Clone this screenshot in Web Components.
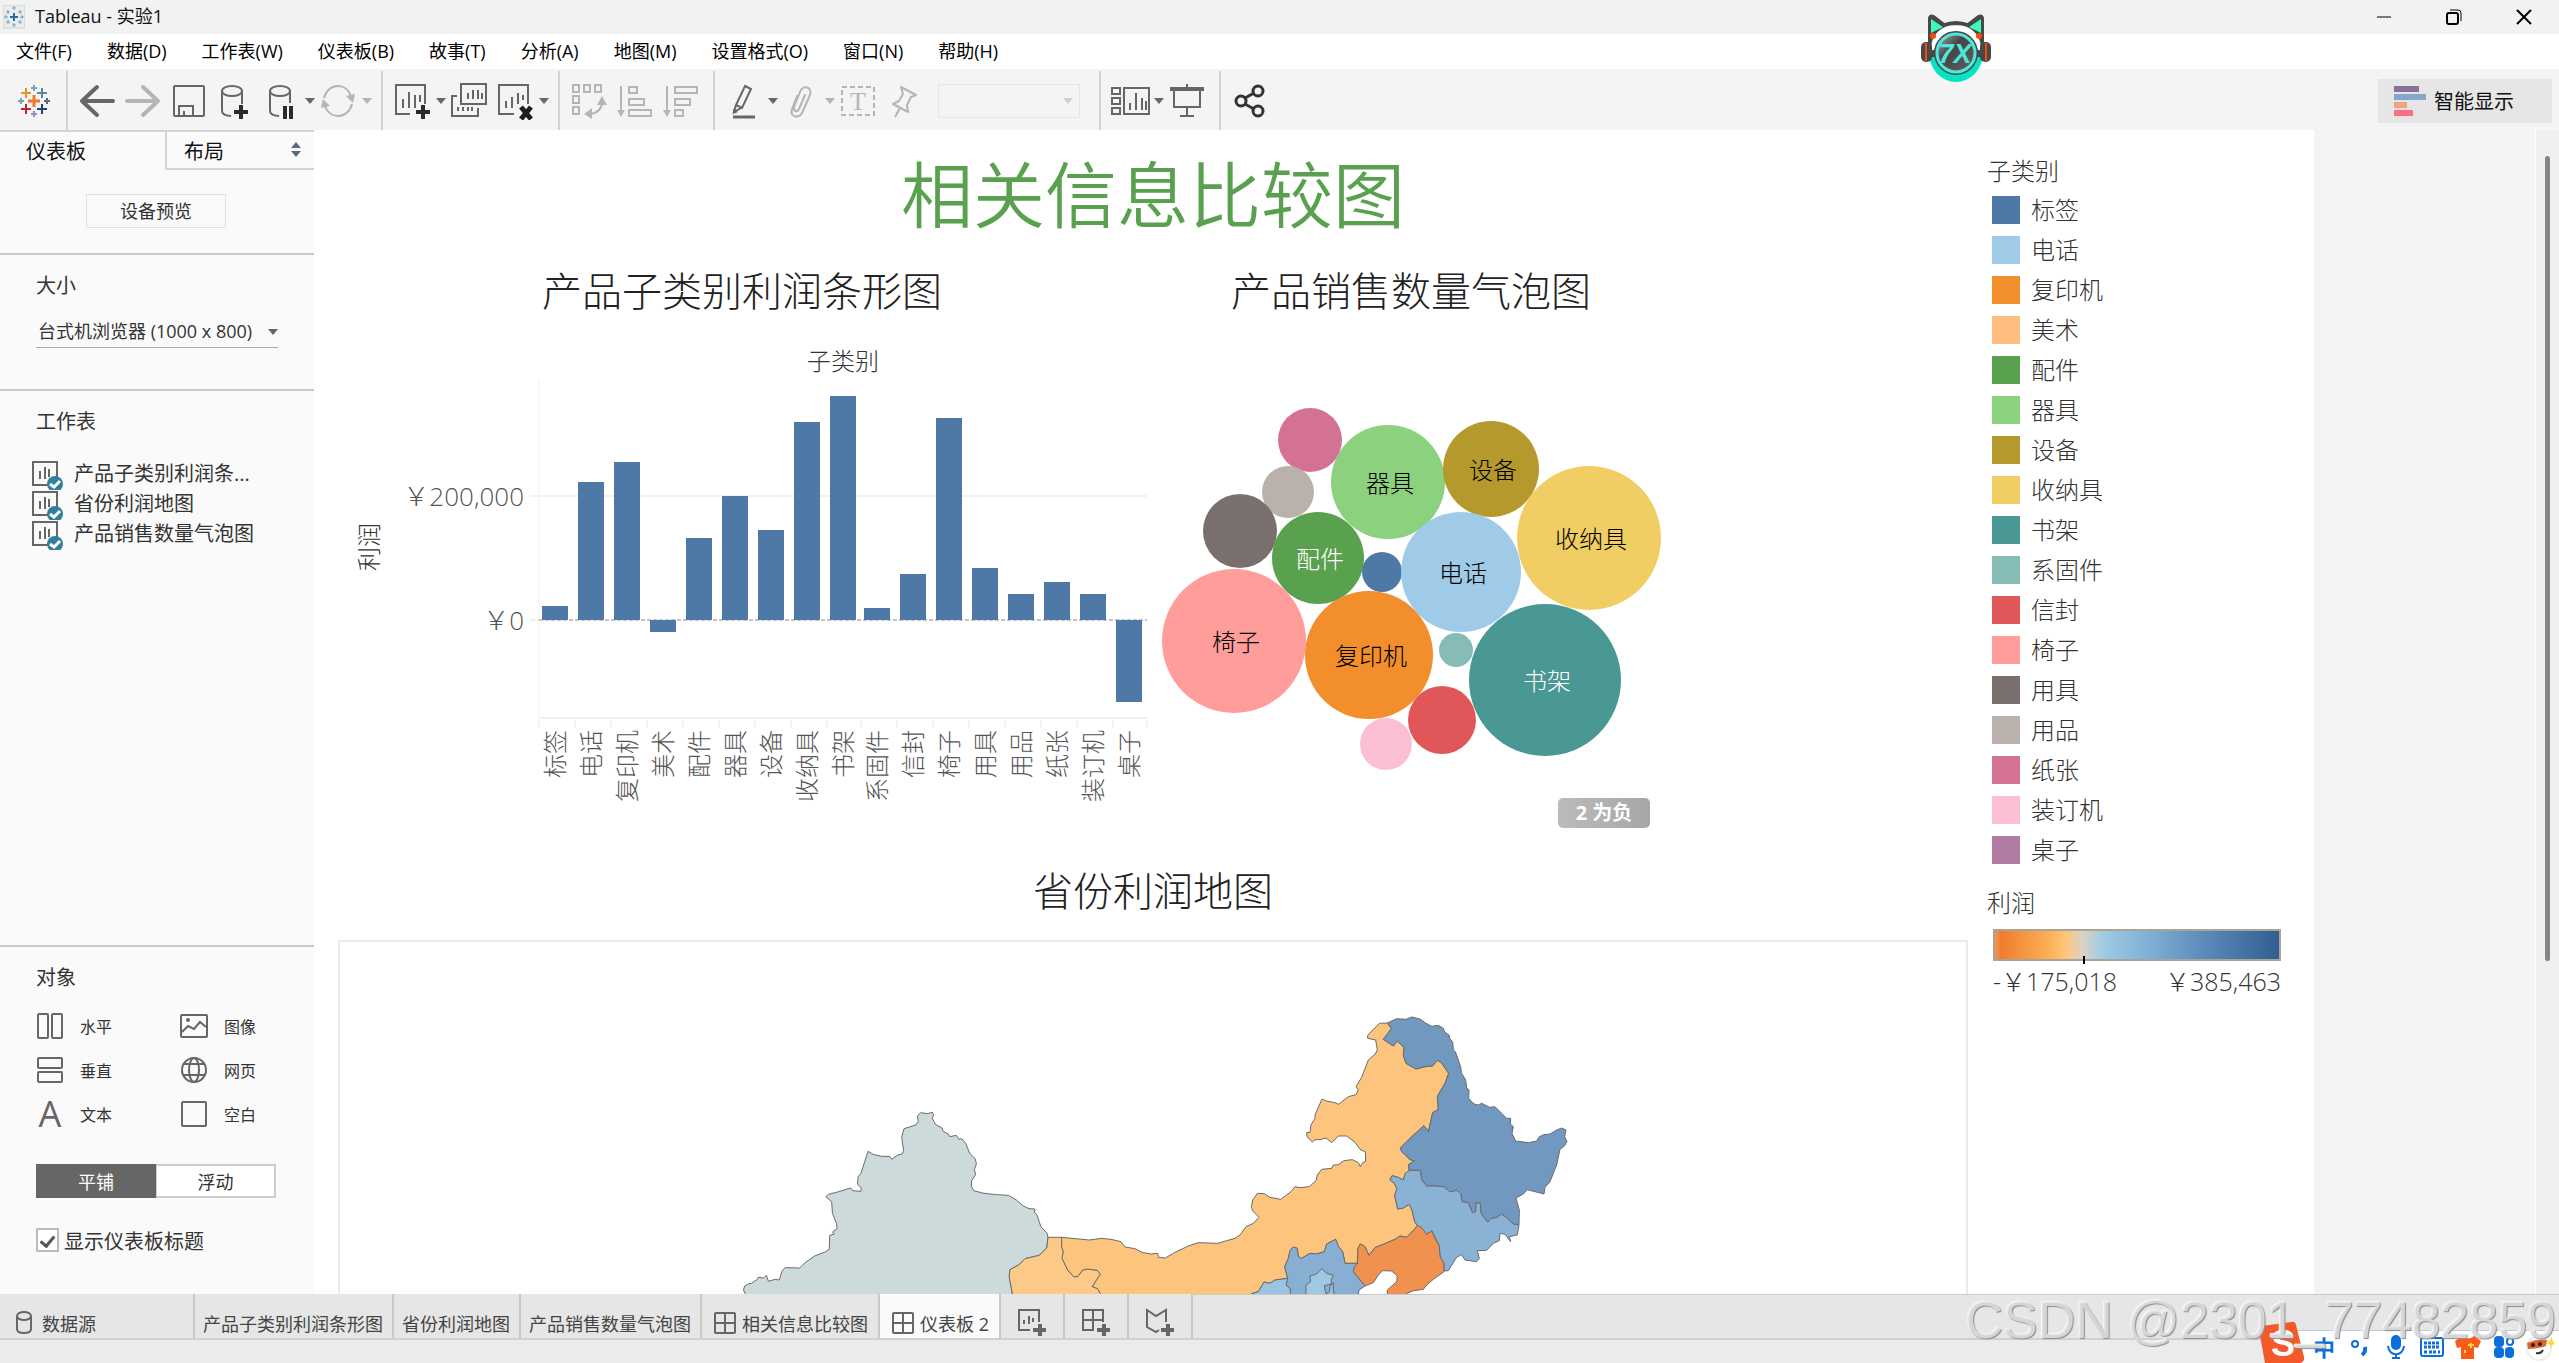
<!DOCTYPE html>
<html lang="zh-CN">
<head>
<meta charset="utf-8">
<title>Tableau - 实验1</title>
<style>
html,body{margin:0;height:100%}
body{font-family:"Open Sans","Noto Sans CJK SC",sans-serif;font-size:18px;color:#1a1a1a;background:#f4f4f4;overflow:hidden}
</style>
</head>
<body>
<tableau-app></tableau-app>
<script>
const BASE = `*{box-sizing:border-box}
button{font:inherit;color:inherit;background:none;border:0;padding:0;margin:0;display:flex;align-items:center;justify-content:center}
svg{display:block;flex:none}`;

function define(name, css, html) {
  customElements.define(name, class extends HTMLElement {
    constructor() {
      super();
      const t = document.createElement('template');
      t.innerHTML = `<style>${BASE}${css}</style>${typeof html === 'function' ? html() : html}`;
      this.attachShadow({ mode: 'open' }).append(t.content.cloneNode(true));
    }
  });
}

const svg = (w, h, body, attrs = '') =>
  `<svg width="${w}" height="${h}" viewBox="0 0 ${w} ${h}" fill="none" stroke="currentColor" stroke-width="2" aria-hidden="true" ${attrs}>${body}</svg>`;
const plus = (x, y, r, c, w = 2) => `<path stroke="${c}" stroke-width="${w}" d="M${x - r} ${y}h${2 * r}M${x} ${y - r}v${2 * r}"/>`;
const CARET = svg(10, 6, '<path fill="currentColor" stroke="none" d="M0 0h10L5 6z"/>');

const ICON = {
  appSmall: svg(22, 24, `<rect x="0" y="0" width="22" height="23" fill="#ececec" stroke="#cfcfcf" stroke-width="1"/>
    ${plus(11, 12, 4, '#1f6fa8')}${plus(5, 7, 2, '#6aa6cc', 1)}${plus(17, 7, 2, '#6aa6cc', 1)}${plus(5, 17, 2, '#6aa6cc', 1)}${plus(17, 17, 2, '#6aa6cc', 1)}${plus(11, 3, 2, '#6aa6cc', 1)}${plus(11, 20, 2, '#6aa6cc', 1)}${plus(3, 12, 2, '#6aa6cc', 1)}${plus(19, 12, 2, '#6aa6cc', 1)}`),
  logo: svg(36, 36, plus(18, 18, 6, '#eb7a2d', 3) + plus(10, 10, 5, '#e8912d', 2) + plus(26, 10, 5, '#59879b', 2) + plus(10, 26, 5, '#c72035', 2) + plus(26, 26, 5, '#1f447a', 2) + plus(18, 5, 3, '#7ba2b5', 2) + plus(18, 31, 3, '#8a94b8', 2) + plus(5, 18, 3, '#7ba2b5', 2) + plus(31, 18, 3, '#5b6591', 2)),
  back: svg(36, 36, '<path stroke-width="4" stroke-linecap="round" stroke-linejoin="round" d="M34 18H3M18 4L3 18l15 14"/>'),
  forward: svg(36, 36, '<path stroke-width="4" stroke-linecap="round" stroke-linejoin="round" d="M2 18h31M18 4l15 14-15 14"/>'),
  save: svg(36, 36, '<rect x="3" y="3" width="30" height="30" rx="1"/><path d="M8 33V23h14v10M13 33v-5"/>'),
  dbPlus: svg(36, 36, '<ellipse cx="15" cy="8" rx="10" ry="5"/><path d="M5 8v20c0 3 4 5 9 5M25 8v13"/><path stroke="#2b2b2b" stroke-width="4" d="M17 29h14M24 22v14"/>'),
  dbPause: svg(36, 36, '<ellipse cx="17" cy="8" rx="10" ry="5"/><path d="M7 8v20c0 3 4 5 9 5M27 8v12"/><path stroke="#2b2b2b" stroke-width="4" d="M22 23v13M28 23v13"/>'),
  refresh: svg(36, 36, '<path d="M4 15C6 7 12 3 18 3c6 0 11 4 13 10M32 21c-2 8-8 12-14 12-6 0-11-4-13-10"/><path fill="currentColor" stroke="none" d="M26 13l9-2-2 9zM10 23l-9 2 2-9z"/>'),
  newSheet: svg(38, 38, '<path d="M17 32H3V3h29v19"/><path d="M10 26v-9M16 26V10M22 26V13M27 20v-7"/><path stroke="#2b2b2b" stroke-width="4" d="M23 30h14M30 23v14"/>'),
  dupSheet: svg(38, 38, '<rect x="11" y="2" width="25" height="20"/><path d="M18 17v-6M23 17V8M28 17v-9M32 17v-6M7 14H2v20h26v-8M8 29v-4M13 29v-4M18 29v-4M22 29v-4"/>'),
  clearSheet: svg(38, 38, '<path d="M18 32H3V3h29v19"/><path d="M10 26v-7M16 26V15M22 22V11M27 18v-5"/><path stroke="#1d1d1d" stroke-width="5" d="M25 25l10 12M35 25L25 37"/>'),
  swap: svg(38, 38, '<path d="M3 3h6v7H3zM14 3h6v7h-6zM25 3h6v7h-6zM3 14h6v7H3zM3 25h6v7H3zM20 32c8-1 12-6 12-13"/><path fill="currentColor" stroke="none" d="M32 14l5 9H27zM14 32l8-6v11z"/>'),
  sortAsc: svg(38, 38, '<path d="M5 4v28M13 5h8v6h-8zM13 17h15v6H13zM13 28h22v6H13z"/><path fill="currentColor" stroke="none" d="M1 28h8l-4 7z"/>'),
  sortDesc: svg(38, 38, '<path d="M5 4v28M13 5h22v6H13zM13 17h15v6H13zM13 28h8v6h-8z"/><path fill="currentColor" stroke="none" d="M1 28h8l-4 7z"/>'),
  pen: svg(36, 38, '<path d="M19 4l6 3-9 19-6-3zM10 23l-2 7 7-4"/><path stroke-width="3" d="M7 35h22"/><path fill="currentColor" stroke="none" d="M7 27l5 3-5 2z"/>'),
  clip: svg(36, 36, '<path d="M22 12l-6 14c-2 4-6 2-5-2l6-15c3-8 13-5 10 3l-8 18c-3 6-13 4-10-4l5-13" stroke-linecap="round"/>'),
  textBox: svg(36, 36, '<rect x="2" y="4" width="32" height="28" stroke-dasharray="5 3"/><text x="18" y="27" text-anchor="middle" font-family="Liberation Serif" font-size="26" fill="currentColor" stroke="none">T</text>'),
  pin: svg(36, 36, '<path stroke-linejoin="round" d="M15 4l15 8-5 2-4 8 1 7-15-8 6-3 4-7zM14 25L9 34"/>'),
  layout: svg(40, 36, '<path d="M2 5h8v6H2zM2 15h8v6H2zM2 25h8v6H2zM14 5h25v26H14zM20 27v-7M26 27V10M32 27V15M36 27v-9"/>'),
  present: svg(36, 38, '<path stroke-width="4" d="M1 7h34"/><path d="M18 2v4M5 8v17h26V8M18 25v9M11 34h14"/>'),
  share: svg(36, 36, '<g stroke="#333" stroke-width="3"><circle cx="9" cy="18" r="5"/><circle cx="26" cy="8" r="5"/><circle cx="26" cy="28" r="5"/><path d="M13 15l9-5M13 21l9 5"/></g>'),
  sheetCheck: svg(34, 30, '<path d="M18 25H3V2h24v16"/><path d="M10 19v-8M15 19V7M19 17V9"/><circle cx="25" cy="24" r="8" fill="#317f9e" stroke="none"/><path stroke="#fff" stroke-width="3" d="M20 24l4 3 6-6"/>'),
  horiz: svg(28, 28, '<rect x="2" y="2" width="10" height="24" rx="1"/><rect x="16" y="2" width="10" height="24" rx="1"/>'),
  vert: svg(28, 28, '<rect x="2" y="2" width="24" height="10" rx="1"/><rect x="2" y="16" width="24" height="10" rx="1"/>'),
  letter: svg(28, 28, '<text x="14" y="27" text-anchor="middle" font-family="Open Sans" font-size="36" fill="currentColor" stroke="none">A</text>', 'overflow="visible"'),
  image: svg(28, 28, '<rect x="1" y="3" width="26" height="22" rx="1"/><circle cx="8" cy="8" r="2" fill="currentColor" stroke="none"/><path d="M2 20l6-6 6 3 6-7 6 5"/>'),
  globe: svg(28, 28, '<circle cx="14" cy="14" r="12"/><ellipse cx="14" cy="14" rx="5" ry="12"/><path d="M4 8h20M3 19h22"/>'),
  blank: svg(28, 28, '<rect x="2" y="2" width="24" height="24" rx="1"/>'),
  db: svg(18, 24, '<ellipse cx="9" cy="5" rx="7" ry="4"/><path d="M2 5v13c0 3 3 4 7 4s7-1 7-4V5"/>'),
  grid: svg(24, 24, '<rect x="2" y="2" width="20" height="20" rx="1"/><path d="M12 2v20M2 12h20"/>'),
  addSheet: svg(32, 28, '<path d="M14 22H3V2h20v12M8 16v-4M13 16V8M17 14v-4"/><path stroke-width="4" d="M17 22h13M24 16v12"/>'),
  addDash: svg(32, 28, '<path d="M14 22H3V2h20v12M13 2v20M3 12h20"/><path stroke-width="4" d="M17 22h13M24 16v12"/>'),
  addStory: svg(32, 28, '<path d="M15 22l-3 2-9-5V2l9 6 10-6v12"/><path stroke-width="4" d="M17 22h13M24 16v12"/>')
};

/* ---------- window chrome ---------- */
define('title-bar', `
:host{display:flex;height:34px;background:#f2f2f2;align-items:center;padding-left:3px;font-size:18px;color:#111}
h1{font:inherit;margin:0 auto 0 10px;line-height:30px;padding-bottom:2px}
button{width:70px;height:34px;color:#000}`,
`${ICON.appSmall}<h1>Tableau - 实验1</h1>
<button aria-label="最小化">${svg(16, 16, '<path d="M1 8h14" stroke-width="1"/>')}</button>
<button aria-label="还原">${svg(16, 16, '<rect x="1" y="4" width="11" height="11" rx="2"/><path d="M4 1h8q3 0 3 3v8" stroke-width="1"/>')}</button>
<button aria-label="关闭">${svg(16, 16, '<path d="M1 1l14 14M15 1L1 15"/>')}</button>`);

define('menu-bar', `
:host{display:block;background:#fff;height:35px}
nav{display:flex;height:35px;color:#000;margin-left:-2px}
button{padding:0 17px 3px 18px}`,
`<nav>${['文件(F)', '数据(D)', '工作表(W)', '仪表板(B)', '故事(T)', '分析(A)', '地图(M)', '设置格式(O)', '窗口(N)', '帮助(H)'].map(t => `<button>${t}</button>`).join('')}</nav>`);

define('tool-button', `
:host{display:flex;color:#666;align-items:center}
:host([off]){color:#b5b5b5}
.main{width:46px;height:46px}
.more{width:11px;height:46px}
:host(:not([split])) .more{display:none}`,
`<button class="main"><slot></slot></button><button class="more" aria-label="更多">${CARET}</button>`);

define('tool-group', `
:host{display:flex;align-items:center;height:59px;padding:0 9px 0 6px;border-right:2px solid #d2d2d2}
:host([first]){padding-left:11px}
:host([last]){border:0}`, `<slot></slot>`);

define('tool-bar', `
:host{display:flex;height:61px;background:#f4f4f4;align-items:center;padding:2px 7px 0 0}
.combo{position:relative;display:flex;align-items:center;margin:0 10px 0 11px;color:#cfcfcf}
select{appearance:none;width:142px;height:34px;border:1px solid #e2e2e2;background:#f4f4f4;border-radius:0}
.combo svg{position:absolute;right:7px}
.show{margin-left:auto;width:174px;height:44px;background:#e6e6e6;color:#111;font-size:20px;justify-content:flex-start;padding-left:16px;gap:8px}`,
() => {
  const b = (i, label, a = '') => `<tool-button ${a} title="${label}">${ICON[i]}</tool-button>`;
  return `<tool-group first>${b('logo', '开始')}</tool-group>
<tool-group>${b('back', '撤销')}${b('forward', '重做', 'off')}${b('save', '保存')}${b('dbPlus', '新建数据源')}${b('dbPause', '暂停', 'split')}${b('refresh', '刷新', 'off split')}</tool-group>
<tool-group>${b('newSheet', '新建工作表', 'split')}${b('dupSheet', '复制')}${b('clearSheet', '清除', 'split')}</tool-group>
<tool-group>${b('swap', '交换', 'off')}${b('sortAsc', '升序', 'off')}${b('sortDesc', '降序', 'off')}</tool-group>
<tool-group>${b('pen', '突出显示', 'split')}${b('clip', '分组', 'off split')}${b('textBox', '标签', 'off')}${b('pin', '固定', 'off')}
<span class="combo"><select aria-label="适合" disabled></select>${CARET}</span></tool-group>
<tool-group>${b('layout', '显示卡', 'split')}${b('present', '演示')}</tool-group>
<tool-group last>${b('share', '共享')}</tool-group>
<button class="show">${svg(32, 32, '<g stroke="none"><path fill="#857199" d="M0 1h25v6H0z"/><path fill="#85a6cc" d="M0 9h32v6H0z"/><path fill="#f2a57c" d="M0 17h13v6H0z"/><path fill="#fb7080" d="M0 25h19v6H0z"/></g>')}智能显示</button>`;
});

define('cat-mascot', `:host{position:absolute;top:13px;right:567px;display:block}`,
`<svg width="72" height="70" viewBox="0 0 72 70" role="img" aria-label="7X">
<defs><linearGradient id="g" x1="0" y1="0" x2="1" y2="1"><stop offset="0" stop-color="#bbb"/><stop offset=".4" stop-color="#444"/><stop offset="1" stop-color="#666"/></linearGradient>
<clipPath id="c"><ellipse cx="36" cy="40" rx="27" ry="29"/></clipPath></defs>
<path d="M8 34V5q1-5 6-3l13 10-4 16zM64 34V5q-1-5-6-3L45 12l4 16z" fill="#484848"/>
<ellipse cx="36" cy="40" rx="27" ry="29" fill="#fff"/><path clip-path="url(#c)" d="M0 42h72v28H0z" fill="#08e3c4"/>
<path d="M9 36Q10 11 36 10q26 1 27 26" fill="none" stroke="#484848" stroke-width="4"/>
<path d="M11 20V6l12 8zM61 20V6l-12 8z" fill="#3dfab5"/>
<rect x="1" y="29" width="11" height="20" rx="5" fill="#484848"/><rect x="60" y="29" width="11" height="20" rx="5" fill="#484848"/>
<path d="M6 30v18M66 30v18" stroke="#f04e0c" stroke-width="2"/>
<path d="M8 37h56v7H8z" fill="#484848"/>
<circle cx="13" cy="23" r="3" fill="#f04e0c"/><circle cx="59" cy="23" r="3" fill="#f04e0c"/>
<circle cx="36" cy="40" r="21" fill="url(#g)" stroke="#484848" stroke-width="2"/><circle cx="36" cy="40" r="19" fill="none" stroke="#4de8dc" stroke-width="3"/>
<text x="35" y="50" text-anchor="middle" font-family="Liberation Sans" font-weight="bold" font-style="italic" font-size="27" fill="#4de8dc">7X</text></svg>`);

/* ---------- side panel ---------- */
define('side-panel', `
:host{display:flex;flex-direction:column;flex:none;width:314px;background:#fafafa;color:#333}
.tabs{display:grid;grid-template-columns:165px 1fr;height:40px;font-size:20px;color:#111}
.tabs button{justify-content:flex-start;padding:0 0 2px 26px;border-top:2px solid #d4d4d4;height:40px}
.tabs button+button{padding:0 13px 0 17px;justify-content:space-between;border-left:2px solid #d4d4d4;border-bottom:2px solid #d4d4d4}
.preview{padding:24px 86px 25px}
.preview button{width:140px;height:34px;border:1px solid #e0e0e0;padding-bottom:2px}
section{border-top:2px solid #c9c9c9;padding:16px 36px 0}
h2{font-size:20px;font-weight:400;line-height:30px;margin:0}
.size{position:relative;margin:15px 0 41px;display:flex;align-items:center;color:#666}
.size select{appearance:none;font:inherit;color:#333;width:100%;height:32px;border:0;border-bottom:1px solid #aaa;background:none;padding:0 0 2px 2px;border-radius:0}
.size svg{position:absolute;right:0}
.sheets{flex:1}
ul{list-style:none;margin:23px 0 0 -6px;padding:0;font-size:20px;line-height:28px}
li{display:flex;gap:10px;height:30px;align-items:flex-start;white-space:nowrap;color:#333}
li svg{color:#666}
.objects{display:grid;grid-template-columns:144px 1fr;margin-top:11px;font-size:16px}
.objects button{height:44px;justify-content:flex-start;gap:16px}
.objects svg{color:#666}
.mode{display:grid;grid-template-columns:1fr 1fr;width:240px;height:34px;margin-top:28px}
.mode button{border:1px solid #ccc;border-width:2px 2px 2px 1px;background:#fff}
.mode button[aria-pressed=true]{background:#666;color:#fff;border:0}
label{display:flex;align-items:center;gap:5px;height:28px;margin:28px 0 40px;font-size:20px}
input{appearance:none;margin:0;width:23px;height:24px;border:2px solid #bbb;border-radius:1px;background:#fff;display:grid;place-items:center}
input:checked::before{content:"";width:6px;height:11px;border:solid #555;border-width:0 3px 3px 0;transform:rotate(40deg)}`,
`<div class="tabs"><button>仪表板</button><button>布局${svg(10, 16, '<path fill="#5c6b80" stroke="none" d="M0 6l5-6 5 6zM0 9h10l-5 6z"/>')}</button></div>
<div class="preview"><button>设备预览</button></div>
<section><h2>大小</h2><div class="size"><select aria-label="大小"><option>台式机浏览器 (1000 x 800)</option></select>${CARET}</div></section>
<section class="sheets"><h2>工作表</h2><ul>${['产品子类别利润条...', '省份利润地图', '产品销售数量气泡图'].map(t => `<li>${ICON.sheetCheck}${t}</li>`).join('')}</ul></section>
<section><h2>对象</h2><div class="objects">${[['horiz', '水平'], ['image', '图像'], ['vert', '垂直'], ['globe', '网页'], ['letter', '文本'], ['blank', '空白']].map(([i, t]) => `<button>${ICON[i]}${t}</button>`).join('')}</div>
<div class="mode"><button aria-pressed="true">平铺</button><button aria-pressed="false">浮动</button></div>
<label><input type="checkbox" checked>显示仪表板标题</label></section>`);

/* ---------- charts ---------- */
const CATS = [
  ['标签', '#4e79a7', 14], ['电话', '#a0cbe8', 138], ['复印机', '#f28e2b', 158], ['美术', '#ffbe7d', -12],
  ['配件', '#59a14f', 82], ['器具', '#8cd17d', 124], ['设备', '#b6992d', 90], ['收纳具', '#f1ce63', 198],
  ['书架', '#499894', 224], ['系固件', '#86bcb6', 12], ['信封', '#e15759', 46], ['椅子', '#ff9d9a', 202],
  ['用具', '#79706e', 52], ['用品', '#bab0ac', 26], ['纸张', '#d37295', 38], ['装订机', '#fabfd2', 26], ['桌子', '#b07aa1', -82]
];

define('chart-card', `
:host{display:block;min-width:0}
h3{margin:0;font-size:40px;line-height:58px;padding-bottom:2px;font-weight:300;text-align:center;color:#222}`,
`<h3><slot name="title"></slot></h3><slot></slot>`);

define('bar-chart', `
:host{display:block}
svg{width:100%;height:auto;overflow:visible}
text{font-size:24px;font-weight:300;fill:#555}
.t{fill:#333}
.n{font-size:26px}`,
() => {
  const x = i => 539 + i * 36 - (i > 8 ? 2 : 0);
  let s = `<path d="M530 496h617M530 620h9" stroke="#f1f1f1" stroke-width="2"/><path d="M539 380v338" stroke="#efefef"/><path d="M539 718h608" stroke="#f1f1f1" stroke-width="2"/>
  <path d="M539 620h608" stroke="#c4c4c4" stroke-width="2" stroke-dasharray="4 2"/>
  <text class="t" x="843" y="370" text-anchor="middle">子类别</text><text class="t" transform="translate(378 547) rotate(-90)" text-anchor="middle">利润</text>
  <text class="n" x="524" y="506" text-anchor="end">￥200,000</text><text class="n" x="524" y="630" text-anchor="end">￥0</text>`;
  CATS.forEach(([n, , v], i) => {
    s += `<rect x="${x(i) + 3}" y="${v > 0 ? 620 - v : 620}" width="26" height="${Math.abs(v)}" fill="#4e79a7"/>
    <path d="M${x(i)} 720v8" stroke="#e8e8e8"/><text transform="translate(${x(i) + 25} 730) rotate(-90)" text-anchor="end">${n}</text>`;
  });
  return `<svg viewBox="338 322 808 540" role="img" aria-label="产品子类别利润条形图">${s}<path d="M1147 720v8" stroke="#e8e8e8"/></svg>`;
});

define('bubble-chart', `
:host{display:block}
svg{width:100%;height:auto;overflow:visible}
text{font-size:24px;font-weight:300;text-anchor:middle}
.neg{font-size:20px;font-weight:700;fill:#fff}`,
() => {
  const B = [[1310, 440, 32, 14], [1288, 492, 26, 13], [1240, 531, 37, 12], [1318, 558, 46, 4, '#fff'], [1382, 572, 20, 0], [1388, 482, 57, 5, '#000'],
    [1491, 469, 48, 6, '#000'], [1589, 538, 72, 7, '#000'], [1461, 572, 60, 1, '#000'], [1234, 641, 72, 11, '#000'], [1369, 655, 64, 2, '#000'],
    [1456, 650, 17, 9], [1545, 680, 76, 8, '#fff'], [1442, 720, 34, 10], [1386, 744, 26, 15]];
  return `<svg viewBox="1146 322 530 540" role="img" aria-label="产品销售数量气泡图">
  <defs><linearGradient id="n"><stop stop-color="#bcbcbc"/><stop offset="1" stop-color="#a6a6a6"/></linearGradient></defs>
  ${B.map(([x, y, r, c, t]) => `<circle cx="${x}" cy="${y}" r="${r}" fill="${CATS[c][1]}"/>${t ? `<text x="${x + 2}" y="${y + 10}" fill="${t}">${CATS[c][0]}</text>` : ''}`).join('')}
  <rect x="1558" y="798" width="92" height="30" rx="5" fill="url(#n)"/><text class="neg" x="1604" y="820">2 为负</text></svg>`;
});

define('province-map', `
:host{display:block;overflow:hidden;border:solid #ebebeb;border-width:2px 2px 0 2px}
svg{width:100%;height:auto}
path{stroke:#6b6b6b;stroke-width:1px;vector-effect:non-scaling-stroke;stroke-linejoin:round}`,
() => {
  const west = 'translate(700 1000) scale(.3954 .33333)', east = 'translate(1220 990) scale(.33333)';
  const p = (t, fill, d) => `<path transform="${t}" fill="${fill}" d="M${d}Z"/>`;
  const hljW = '565 524 583 513 568 508 560 498 545 485 541 473 570 445 612 407 625 425 638 368 655 358 652 320 660 305 675 280 686 250 665 219 652 211 638 228 615 230 588 237 558 220 550 195 552 172 532 154 520 168 505 158 490 148 514 116 502 99';
  return `<svg viewBox="340 942 1626 700" role="img" aria-label="省份利润地图">` +
  p(west, '#cddadb', '114 900L114 881 110 870 113 858 122 852 130 850 145 838 147 832 160 834 168 826 173 844 190 838 200 840 208 812 215 803 252 804 268 786 290 768 318 755 327 748 328 706 340 702 335 696 347 686 345 670 335 640 333 605 318 590 325 583 345 577 381 564 386 572 407 574 408 564 398 552 400 530 407 520 425 454 440 464 460 469 480 469 485 478 500 465 511 462 515 452 510 412 516 386 546 375 552 365 550 348 558 338 575 341 588 337 591 346 587 354 596 374 612 384 615 394 628 402 632 410 648 406 655 418 662 416 672 430 682 460 696 476 699 492 694 508 697 524 687 542 686 558 692 572 718 580 750 584 780 586 800 600 818 618 832 626 847 627 846 638 852 644 862 680 878 700 880 712 877 744 858 766 822 776 808 793 784 809 782 830 790 881 790 900') +
  p(west, '#fdc987', '880 712L915 712 915 740 919 755 916 775 930 810 945 830 955 830 968 810 980 807 1005 811 1013 822 992 860 1006 866 1013 881 1013 900 790 900 790 881 782 830 784 809 808 793 822 776 858 766 877 744') +
  p(east, '#fcc47d', '-475 742L-392 750 -356 745 -327 748 -297 755 -285 771 -255 776 -234 787 -208 792 -187 790 -184 802 -164 804 -137 788 -95 768 -66 758 -6 760 20 752 45 745 60 735 78 710 100 700 117 682 100 665 94 652 98 630 112 610 133 611 150 622 182 628 213 605 225 590 240 593 268 590 288 572 292 555 305 538 335 535 340 525 355 524 372 512 397 509 415 518 421 530 428 518 437 514 436 486 420 478 405 457 380 438 355 438 335 458 318 444 300 449 285 449 277 456 261 440 260 428 270 427 273 405 285 385 285 375 306 327 318 333 345 338 356 343 385 320 408 314 415 300 408 290 425 262 445 210 465 193 472 180 467 150 443 145 443 136 478 100 502 99 514 116 490 148 505 158 520 168 532 154 552 172 550 195 558 220 588 237 615 230 638 228 652 211 665 219 686 250 675 280 660 305 652 320 655 358 638 368 625 425 612 407 570 445 541 473 545 485 560 498 568 508 583 513 565 524 568 545 556 550 550 570 535 562 516 557 510 570 523 580 531 597 524 615 533 657 550 654 567 643 576 660 584 695 592 706 585 716 560 742 540 738 525 748 490 763 465 773 447 796 435 770 421 762 414 775 412 820 375 820 368 785 356 770 347 748 320 762 313 785 290 792 270 790 245 805 235 800 232 775 220 771 210 782 205 805 194 830 203 865 165 870 150 880 132 876 115 905 95 911 95 930 -359 930 -359 911 -367 896 -383 890 -359 852 -368 841 -398 837 -412 840 -427 860 -439 860 -457 840 -474 805 -470 785 -475 770') +
  p(east, '#7198bf', `502 99L530 86 558 88 575 81 600 87 618 100 635 109 655 106 670 115 674 126 687 135 690 148 698 155 700 180 706 185 722 230 724 248 737 270 740 293 747 300 746 325 757 337 765 343 775 345 785 340 795 345 808 352 825 350 845 370 860 385 872 385 871 402 880 410 876 430 887 453 925 458 950 453 958 440 972 434 990 432 1010 420 1025 414 1038 420 1034 440 1041 455 1033 468 1020 478 1010 525 1002 545 990 575 975 592 972 612 922 599 910 612 888 624 898 660 897 705 880 702 862 685 845 672 830 683 815 685 803 697 783 670 781 640 768 638 767 665 757 668 745 638 726 635 722 610 710 601 690 606 672 590 662 590 645 588 620 588 605 570 601 541 568 541L${hljW}`) +
  p(east, '#8ab2d5', '568 541L601 541 605 570 620 588 645 588 672 590 690 606 710 601 722 610 726 635 745 638 757 668 767 665 768 638 781 640 783 670 803 697 815 685 830 683 845 672 862 685 880 702 897 705 892 735 868 740 872 755 855 733 840 730 838 752 820 760 800 781 772 782 778 805 770 815 735 810 725 794 710 802 685 842 672 843 672 820 660 800 658 768 636 723 620 733 592 706 584 695 576 660 567 643 550 654 533 657 524 615 531 597 523 580 510 570 516 557 535 562 550 570 556 550') +
  p(east, '#f19150', '592 706L605 713 620 733 636 723 645 745 658 768 660 800 672 820 672 845 640 868 620 885 610 898 580 902 560 911 540 930 502 930 502 900 530 875 532 858 515 843 488 842 475 855 460 878 435 888 420 870 400 845 403 830 412 820 414 775 421 762 435 770 447 796 465 773 490 763 525 748 540 738 560 742 585 716') +
  p(east, '#87afd3', '412 820L375 820 368 785 356 770 347 748 320 762 313 785 290 792 270 790 245 805 235 800 232 775 220 771 210 782 205 805 194 830 203 865 198 885 210 895 214 930 413 930 417 900 435 888 420 870 400 845 403 830') +
  p(east, '#9ac4e1', '203 865L165 870 150 880 132 876 115 905 95 911 95 930 214 930 210 895 198 885') +
  p(east, '#a0c8e5', '305 836L320 850 340 856 333 870 335 882 313 887 316 905 325 930 258 930 258 885 272 875 270 858 290 852') +
  p(east, '#93bcdd', '340 878L330 888 328 905 318 911 318 930 348 930 340 900') + '</svg>';
});

define('color-legend', `
:host{display:block;padding:26px 0 0 19px;color:#333;font-size:24px;font-weight:300}
h4{font:inherit;line-height:30px;margin:0 0 10px}
ul{list-style:none;margin:0;padding:0 0 0 5px}
li{display:flex;align-items:flex-start;gap:11px;height:28px;line-height:28px;margin-bottom:12px}
i{width:28px;height:28px;flex:none}
.range{padding-top:12px}
.ramp{margin-left:6px;width:288px;height:32px;border:2px solid #aaa495;background:linear-gradient(90deg,#f28e4e 0 1%,#f07c2e 2%,#fdb35a 20%,#ffc57c 25%,#d8d3c8 31%,#9fcbe3 38%,#7fb0d6 54%,#5687b7 76%,#2f5f90);display:flex;align-items:flex-end;padding-left:88px}
.ramp::after{content:"";width:2px;height:8px;background:#000;margin-bottom:-5px}
h4.g{margin-bottom:11px}
p{display:flex;justify-content:space-between;width:288px;margin:5px 0 0 6px;line-height:30px;font-size:25px}`,
`<h4>子类别</h4><ul>${CATS.map(([n, c]) => `<li><i style="background:${c}"></i>${n}</li>`).join('')}</ul>
<div class="range"><h4 class="g">利润</h4><div class="ramp"></div><p><span>-￥175,018</span><span>￥385,463</span></p></div>`);

define('dash-board', `
:host{display:grid;grid-template-columns:1fr 346px;flex:1;min-width:0;background:#fff;overflow:hidden}
main{padding-left:24px;min-width:0}
h2{margin:0;padding-top:11px;font-size:72px;line-height:106px;font-weight:350;color:#59a14f;text-align:center}
.row{display:grid;grid-template-columns:808fr 530fr 292fr;padding-top:15px}
province-map{margin-top:18px}`,
`<main><h2>相关信息比较图</h2>
<div class="row"><chart-card><span slot="title">产品子类别利润条形图</span><bar-chart></bar-chart></chart-card>
<chart-card><span slot="title">产品销售数量气泡图</span><bubble-chart></bubble-chart></chart-card></div>
<chart-card><span slot="title">省份利润地图</span><province-map></province-map></chart-card></main>
<color-legend></color-legend>`);

define('scroll-gutter', `
:host{display:flex;flex:none;width:245px;justify-content:flex-end;background:#f4f4f4}
div{width:24px;border-left:1px solid #fff;background:#f0f0f0;padding:26px 0 0 9px}
i{display:block;width:5px;height:805px;border-radius:3px;background:#858585}`, `<div><i></i></div>`);

/* ---------- bottom ---------- */
define('sheet-tabs', `
:host{display:flex;flex:none;height:46px;background:#e6e6e6;border-bottom:2px solid #d0d0d0;color:#444}
button{height:44px;padding:14px 9px 0 8px;border-right:2px solid #c9c9c9;white-space:nowrap}
.src{width:195px;justify-content:flex-start;padding-left:15px;gap:9px}
.dash{padding:14px 10px 0 11px;gap:5px}
.on{background:#fafafa}
.add{width:64px;padding:12px 0 0}
svg{color:#666}
span{flex:1;border-top:1px solid #c9c9c9}`,
`<button class="src">${ICON.db}数据源</button><button>产品子类别利润条形图</button><button>省份利润地图</button><button>产品销售数量气泡图</button>
<button class="dash">${ICON.grid}相关信息比较图</button><button class="dash on">${ICON.grid}仪表板 2</button>
<button class="add" aria-label="新建工作表">${ICON.addSheet}</button><button class="add" aria-label="新建仪表板">${ICON.addDash}</button><button class="add" aria-label="新建故事">${ICON.addStory}</button><span></span>`);

define('ime-bar', `
:host{position:absolute;right:0;bottom:0;display:block}
.bar{display:grid;grid-template-columns:repeat(7,36px);place-items:center;height:33px;background:#fff;border-top:1px solid #c3cbe0;padding:0 1px 0 11px;color:#0a6fdc}
.s{position:absolute;left:-39px;bottom:0;overflow:visible}
b{font-size:22px;line-height:28px;font-weight:700}`,
`<svg class="s" width="50" height="41" viewBox="0 0 50 41"><path d="M3 8Q2 5 6 4L35 0q4-1 5 3l8 32q1 4-3 6H9z" fill="#f4592a"/><text x="27" y="34" text-anchor="middle" font-family="Liberation Sans" font-weight="bold" font-size="36" fill="#fff">S</text></svg>
<div class="bar"><b>中</b>
${svg(18, 22, '<circle cx="4" cy="8" r="3"/><path stroke-width="4" d="M14 11q1 5-3 8"/>')}
${svg(18, 26, '<rect x="5" y="2" width="8" height="13" rx="4" fill="currentColor"/><path d="M1 12c1 11 15 11 16 0M9 20v4M5 24h8"/>')}
${svg(24, 20, '<rect x="1" y="1" width="22" height="18" rx="2"/><path d="M4 6h16M4 10h16M4 15h3M9 15h7M18 15h2" stroke-dasharray="3 1" stroke-width="3"/>')}
${svg(26, 24, '<path stroke="none" fill="#fb5a1c" d="M7 1q6 5 12 0l7 5-3 7-4-1v12H6V12l-4 1-2-7z"/><path stroke="#ffd24a" d="M16 8v5M13 10h6M10 15v3"/>')}
${svg(20, 22, '<rect x="1" y="1" width="8" height="9" rx="3" fill="currentColor"/><rect x="13" y="2" width="6" height="7" rx="3"/><rect x="1" y="12" width="8" height="9" rx="3" fill="currentColor"/><rect x="12" y="12" width="7" height="9" rx="3" fill="currentColor"/>')}
${svg(30, 28, '<circle cx="14" cy="15" r="12" fill="#fff" stroke="#eee"/><path stroke="none" fill="#e2622a" d="M2 10q10-5 20-3l-1 6Q12 16 3 16z"/><circle cx="8" cy="12" r="2" fill="#222" stroke="none"/><circle cx="15" cy="11" r="2" fill="#222" stroke="none"/><path stroke="#333" d="M11 20q5 1 7-3"/><path stroke="none" fill="#ffd93a" d="M26 3l2 5 2 3-3 1-1 4-1-4-3-2 3-2z"/>')}
</div>`);

define('water-mark', `
:host{position:absolute;right:3px;bottom:13px;display:block;font:52px/60px "Liberation Sans",sans-serif;color:rgba(226,226,226,.85);text-shadow:1px 1px 1px #8c8c8c,-1px -1px 1px #f8f8f8;pointer-events:none;white-space:nowrap}`,
`CSDN @2301_77482859`);

define('tableau-app', `
:host{position:relative;display:flex;flex-direction:column;height:100vh;overflow:hidden}
title-bar,menu-bar,tool-bar{flex:none}
.body{display:flex;flex:1;min-height:0}
footer{flex:none;height:23px;background:#ebebeb}`,
`<title-bar></title-bar><menu-bar></menu-bar><tool-bar></tool-bar>
<div class="body"><side-panel></side-panel><dash-board></dash-board><scroll-gutter></scroll-gutter></div>
<sheet-tabs></sheet-tabs><footer></footer>
<cat-mascot></cat-mascot><ime-bar></ime-bar><water-mark></water-mark>`);
</script>
</body>
</html>
